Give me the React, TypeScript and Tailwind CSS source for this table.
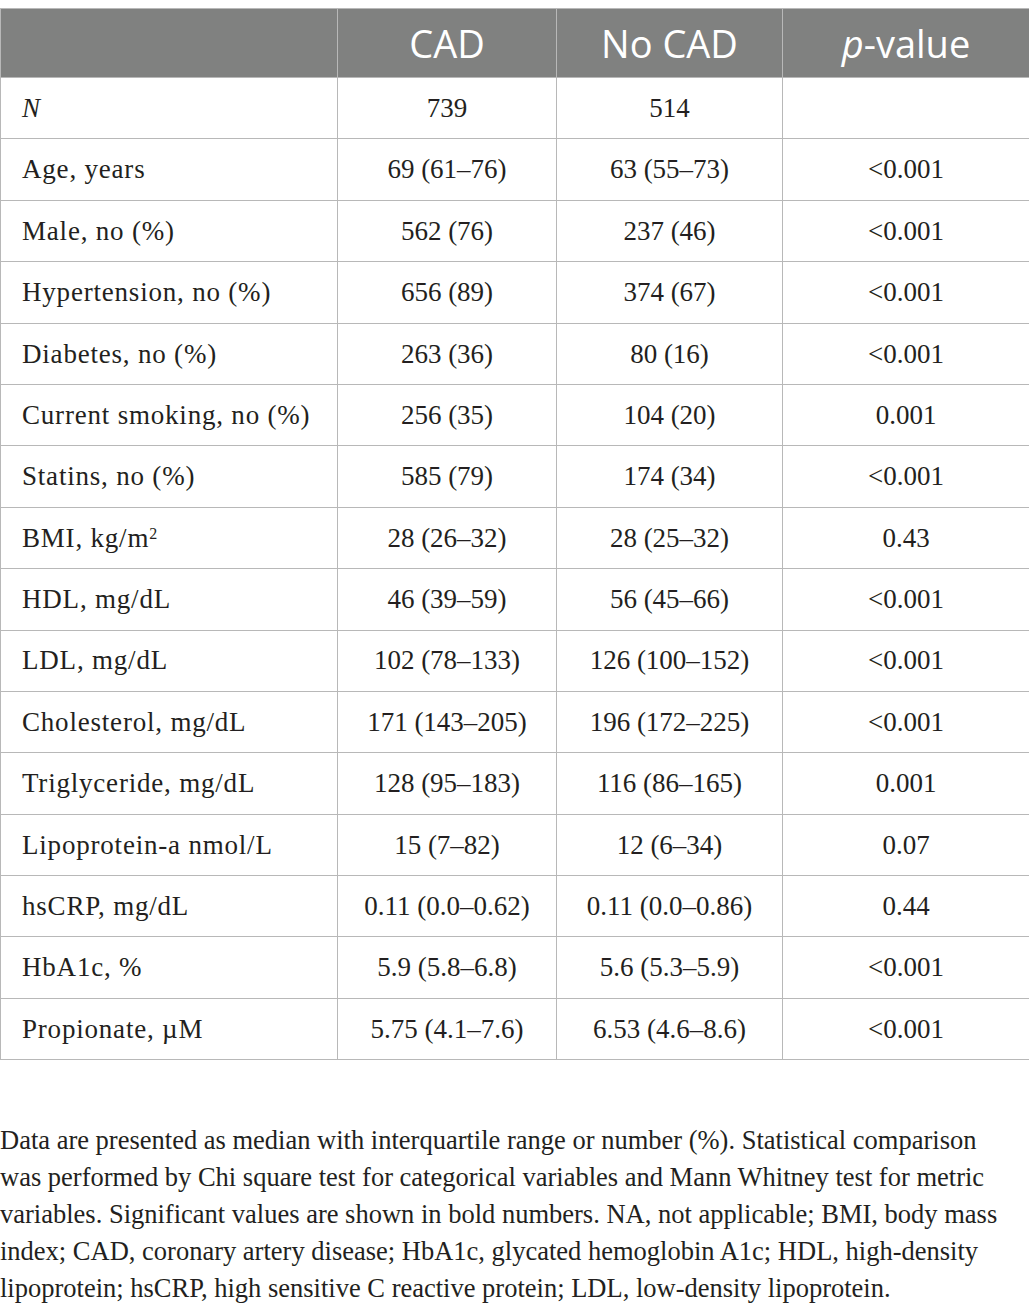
const rows: [React.ReactNode, string, string, string][] = [
  [<i>N</i>, "739", "514", ""],
  ["Age, years", "69 (61–76)", "63 (55–73)", "<0.001"],
  ["Male, no (%)", "562 (76)", "237 (46)", "<0.001"],
  ["Hypertension, no (%)", "656 (89)", "374 (67)", "<0.001"],
  ["Diabetes, no (%)", "263 (36)", "80 (16)", "<0.001"],
  ["Current smoking, no (%)", "256 (35)", "104 (20)", "0.001"],
  ["Statins, no (%)", "585 (79)", "174 (34)", "<0.001"],
  [<>BMI, kg/m<sup className="text-[16px]">2</sup></>, "28 (26–32)", "28 (25–32)", "0.43"],
  ["HDL, mg/dL", "46 (39–59)", "56 (45–66)", "<0.001"],
  ["LDL, mg/dL", "102 (78–133)", "126 (100–152)", "<0.001"],
  ["Cholesterol, mg/dL", "171 (143–205)", "196 (172–225)", "<0.001"],
  ["Triglyceride, mg/dL", "128 (95–183)", "116 (86–165)", "0.001"],
  ["Lipoprotein-a nmol/L", "15 (7–82)", "12 (6–34)", "0.07"],
  ["hsCRP, mg/dL", "0.11 (0.0–0.62)", "0.11 (0.0–0.86)", "0.44"],
  ["HbA1c, %", "5.9 (5.8–6.8)", "5.6 (5.3–5.9)", "<0.001"],
  ["Propionate, µM", "5.75 (4.1–7.6)", "6.53 (4.6–8.6)", "<0.001"],
];

const footnote = [
  "Data are presented as median with interquartile range or number (%). Statistical comparison",
  "was performed by Chi square test for categorical variables and Mann Whitney test for metric",
  "variables. Significant values are shown in bold numbers. NA, not applicable; BMI, body mass",
  "index; CAD, coronary artery disease; HbA1c, glycated hemoglobin A1c; HDL, high-density",
  "lipoprotein; hsCRP, high sensitive C reactive protein; LDL, low-density lipoprotein.",
];

export default function App() {
  const cell = "border border-[#b8b8b8] p-0";
  return (
    <div className="w-[1029px] bg-white pt-2 font-['Liberation_Serif',serif] text-[#231f20]">
      <table className="w-full border-collapse table-fixed">
        <colgroup>
          <col className="w-[337px]" />
          <col className="w-[219px]" />
          <col className="w-[226px]" />
          <col className="w-[247px]" />
        </colgroup>
        <thead>
          <tr className="h-[69px] bg-[#808180] font-['Open_Sans',sans-serif] text-[38px] text-white">
            <th className={cell}></th>
            <th className={`${cell} font-normal`}>CAD</th>
            <th className={`${cell} font-normal`}>No CAD</th>
            <th className={`${cell} font-normal`}>
              <i>p</i>-value
            </th>
          </tr>
        </thead>
        <tbody className="text-[27px]">
          {rows.map((r, i) => (
            <tr key={i} className="h-[61.4px]">
              <td className={`${cell} pl-[21px] tracking-[0.8px]`}>{r[0]}</td>
              <td className={`${cell} text-center`}>{r[1]}</td>
              <td className={`${cell} text-center`}>{r[2]}</td>
              <td className={`${cell} text-center`}>{r[3]}</td>
            </tr>
          ))}
        </tbody>
      </table>
      <div className="mt-[62px] text-[26.5px] leading-[37px]">
        {footnote.map((l, i) => (
          <div key={i} className="whitespace-nowrap">
            {l}
          </div>
        ))}
      </div>
    </div>
  );
}
